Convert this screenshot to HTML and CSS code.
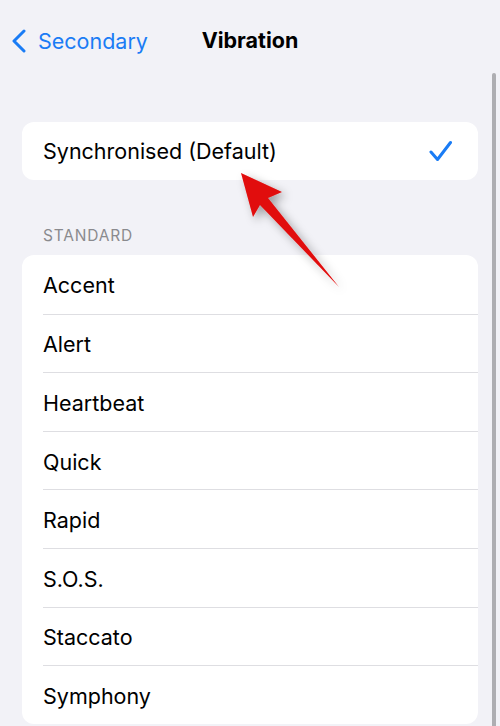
FILE: index.html
```html
<!DOCTYPE html>
<html lang="en">
<head>
  <meta charset="UTF-8" />
  <meta name="viewport" content="width=device-width, initial-scale=1.0" />
  <title>Vibration</title>
  <link rel="stylesheet" href="styles.css">
</head>
<body>
  <div class="nav">
    <a class="back" href="#">
      <svg class="chevron" width="16" height="24" viewBox="0 0 16 24">
        <path d="M13 2 L3 12 L13 22" fill="none" stroke="#1a7cf5" stroke-width="3" stroke-linecap="round" stroke-linejoin="round"/>
      </svg>
      <span>Secondary</span>
    </a>
    <h1 class="title">Vibration</h1>
  </div>

  <div class="content">
    <div class="card">
      <div class="row selected">
        <span>Synchronised (Default)</span>
        <svg class="check" width="24" height="22" viewBox="0 0 24 22">
          <path d="M2 12 L8.5 19.5 L21.5 2.5" fill="none" stroke="#1a7cf5" stroke-width="3" stroke-linecap="round" stroke-linejoin="round"/>
        </svg>
      </div>
    </div>

    <div class="section-title">STANDARD</div>
    <div class="card">
      <div class="row"><span>Accent</span></div>
      <div class="row"><span>Alert</span></div>
      <div class="row"><span>Heartbeat</span></div>
      <div class="row"><span>Quick</span></div>
      <div class="row"><span>Rapid</span></div>
      <div class="row"><span>S.O.S.</span></div>
      <div class="row"><span>Staccato</span></div>
      <div class="row"><span>Symphony</span></div>
    </div>
  </div>

  <div class="scrollbar"></div>

  <svg class="arrow" width="500" height="726" viewBox="0 0 500 726">
    <defs>
      <filter id="shade" x="-50%" y="-50%" width="200%" height="200%">
        <feDropShadow dx="4" dy="4" stdDeviation="5" flood-color="#000" flood-opacity="0.35"/>
      </filter>
    </defs>
    <polygon points="241,173 282,192 268,198 339,287 260,205 253,217" fill="#e10a0a" filter="url(#shade)"/>
  </svg>
</body>
</html>
```

FILE: styles.css
```css
body {
  margin: 0;
  background-color: #f2f2f7;
  font-family: Inter, "Liberation Sans", sans-serif;
  color: #000;
  height: 726px;
  overflow: hidden;
}

.nav {
  height: 80px;
  display: flex;
  align-items: center;
  justify-content: center;
  position: relative;
}

.back {
  position: absolute;
  left: 11px;
  top: 28px;
  display: flex;
  align-items: center;
  gap: 11px;
  color: #1a7cf5;
  text-decoration: none;
  font-size: 21.5px;
}

.chevron {
  display: block;
}

.title {
  margin: 0;
  font-size: 21.5px;
  font-weight: 700;
  letter-spacing: 0;
}

.content {
  padding: 42px 22px 0;
}

.card {
  background-color: #fff;
  border-radius: 12px;
  overflow: hidden;
}

.row {
  height: 58.6px;
  box-sizing: border-box;
  margin-left: 21px;
  padding-right: 25px;
  padding-top: 2px;
  display: flex;
  align-items: center;
  justify-content: space-between;
  font-size: 21.5px;
}

.row.selected {
  height: 58px;
  padding-top: 0;
}

.row + .row {
  border-top: 1px solid #dedee2;
}

.section-title {
  margin: 46px 0 10px 21px;
  font-size: 15.5px;
  color: #8a8a8e;
  letter-spacing: 0.8px;
}

.scrollbar {
  position: absolute;
  left: 492px;
  top: 73px;
  width: 4px;
  height: 660px;
  background-color: #aeaeb2;
  border-radius: 2px;
}

.arrow {
  position: absolute;
  left: 0;
  top: 0;
  pointer-events: none;
}
```
